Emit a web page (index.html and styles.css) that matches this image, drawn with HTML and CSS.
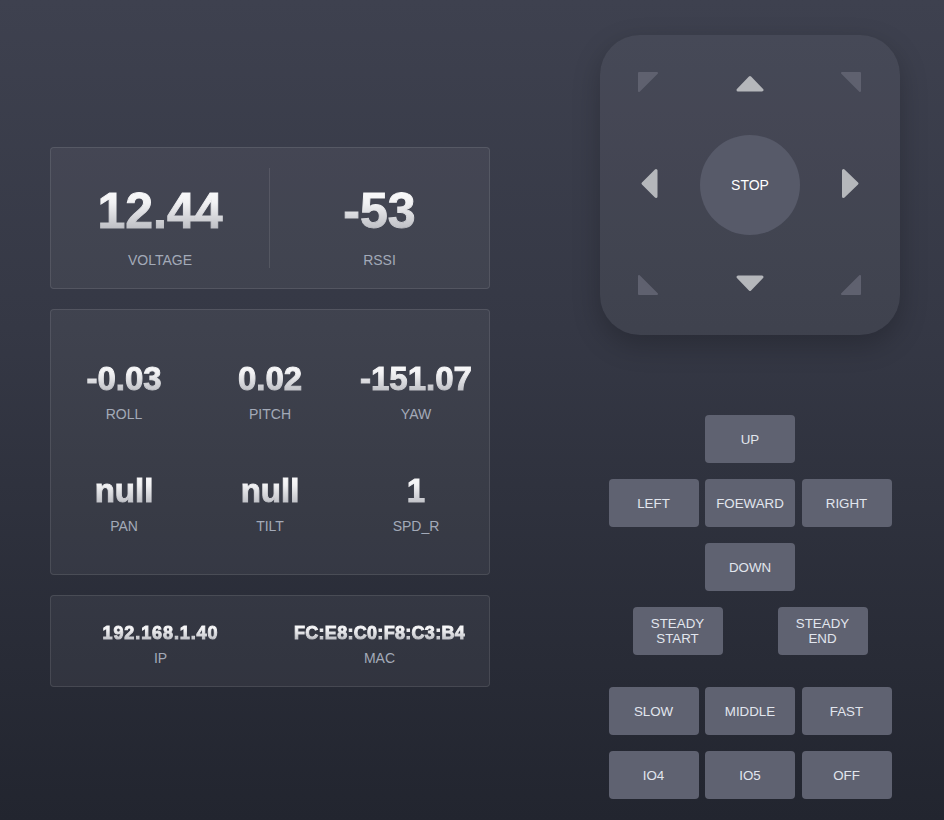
FILE: index.html
```html
<!DOCTYPE html>
<html>
<head>
<meta charset="utf-8">
<link rel="stylesheet" href="styles.css">
</head>
<body>
<div class="page">
  <div class="left">
    <div class="card card-power">
      <div class="cell cell-divider">
        <div class="val val-xl">12.44</div>
        <div class="lbl">VOLTAGE</div>
      </div>
      <div class="cell">
        <div class="val val-xl">-53</div>
        <div class="lbl">RSSI</div>
      </div>
    </div>
    <div class="card card-imu">
      <div class="cell"><div class="val val-md">-0.03</div><div class="lbl">ROLL</div></div>
      <div class="cell"><div class="val val-md">0.02</div><div class="lbl">PITCH</div></div>
      <div class="cell"><div class="val val-md">-151.07</div><div class="lbl">YAW</div></div>
      <div class="cell"><div class="val val-md">null</div><div class="lbl">PAN</div></div>
      <div class="cell"><div class="val val-md">null</div><div class="lbl">TILT</div></div>
      <div class="cell"><div class="val val-md">1</div><div class="lbl">SPD_R</div></div>
    </div>
    <div class="card card-net">
      <div class="cell"><div class="val val-sm val-ip">192.168.1.40</div><div class="lbl">IP</div></div>
      <div class="cell"><div class="val val-sm val-mac">FC:E8:C0:F8:C3:B4</div><div class="lbl">MAC</div></div>
    </div>
  </div>

  <div class="right">
    <div class="pad">
      <div class="pad-cell">
        <svg width="100" height="100" viewBox="0 0 100 100"><polygon class="corner" points="39,38 57,38 39,56"/></svg>
      </div>
      <div class="pad-cell">
        <svg width="100" height="100" viewBox="0 0 100 100"><polygon class="arrow" points="50,42.5 62,55 38,55"/></svg>
      </div>
      <div class="pad-cell">
        <svg width="100" height="100" viewBox="0 0 100 100"><polygon class="corner" points="42,38 60,38 60,56"/></svg>
      </div>
      <div class="pad-cell">
        <svg width="100" height="100" viewBox="0 0 100 100"><polygon class="arrow" points="43,48.5 56,35.5 56,61.5"/></svg>
      </div>
      <div class="pad-cell">
        <button class="stop">STOP</button>
      </div>
      <div class="pad-cell">
        <svg width="100" height="100" viewBox="0 0 100 100"><polygon class="arrow" points="57,48.5 43.5,35.5 43.5,61.5"/></svg>
      </div>
      <div class="pad-cell">
        <svg width="100" height="100" viewBox="0 0 100 100"><polygon class="corner" points="39,41 39,59 57,59"/></svg>
      </div>
      <div class="pad-cell">
        <svg width="100" height="100" viewBox="0 0 100 100"><polygon class="arrow" points="38,42 62,42 50,54.5"/></svg>
      </div>
      <div class="pad-cell">
        <svg width="100" height="100" viewBox="0 0 100 100"><polygon class="corner" points="60,41 60,59 42,59"/></svg>
      </div>
    </div>

    <div class="controls">
      <div class="row"><button class="btn">UP</button></div>
      <div class="row"><button class="btn">LEFT</button><button class="btn">FOEWARD</button><button class="btn">RIGHT</button></div>
      <div class="row"><button class="btn">DOWN</button></div>
      <div class="row row-wide"><button class="btn">STEADY<br>START</button><button class="btn">STEADY<br>END</button></div>
      <div class="row row-spaced"><button class="btn">SLOW</button><button class="btn">MIDDLE</button><button class="btn">FAST</button></div>
      <div class="row"><button class="btn">IO4</button><button class="btn">IO5</button><button class="btn">OFF</button></div>
    </div>
  </div>
</div>
</body>
</html>
```

FILE: styles.css
```css
html, body {
  margin: 0;
  padding: 0;
}

body {
  width: 944px;
  height: 820px;
  overflow: hidden;
  background: linear-gradient(180deg, #3e414f 0%, #353845 40%, #22252f 100%);
  font-family: "Liberation Sans", Arial, sans-serif;
  color: #e2e5ec;
}

.page {
  display: flex;
  align-items: flex-start;
  padding: 35px 0 0 50px;
  gap: 110px;
}

.left {
  width: 440px;
  margin-top: 112px;
  display: flex;
  flex-direction: column;
  gap: 20px;
}

.card {
  box-sizing: border-box;
  background: rgba(255, 255, 255, 0.05);
  border: 1px solid rgba(255, 255, 255, 0.1);
  border-radius: 4px;
  display: grid;
}

.cell {
  display: flex;
  flex-direction: column;
  align-items: center;
}

.val {
  font-weight: bold;
  background: linear-gradient(180deg, #ffffff 0%, #f2f2f4 35%, #a9abb2 100%);
  -webkit-background-clip: text;
  background-clip: text;
  color: transparent;
  -webkit-text-stroke: 1px transparent;
  white-space: nowrap;
}

.lbl {
  font-size: 14px;
  line-height: 16px;
  color: #a3aab8;
}

/* power card */
.card-power {
  grid-template-columns: 1fr 1fr;
  padding: 20px 0;
}

.card-power .cell {
  height: 100px;
}

.cell-divider {
  border-right: 1px solid rgba(255, 255, 255, 0.1);
}

.val-xl {
  font-size: 50px;
  line-height: 56px;
  margin-top: 15px;
  margin-bottom: 13px;
}

/* imu card */
.card-imu {
  grid-template-columns: repeat(3, 1fr);
  grid-auto-rows: 112px;
  padding: 24px 0 16px;
}

.card-imu .cell {
  justify-content: center;
}

.val-md {
  font-size: 33px;
  line-height: 40px;
  margin-bottom: 6px;
  position: relative;
  top: 0;
}

.card-imu .lbl {
  margin-top: 1px;
}

/* net card */
.card-net {
  grid-template-columns: 1fr 1fr;
  padding: 26px 0 20px;
}

.val-sm {
  font-size: 18px;
  line-height: 22px;
  margin-bottom: 6px;
}

.val-ip {
  letter-spacing: 0.9px;
}

.val-mac {
  letter-spacing: 0.3px;
}

/* right column */
.right {
  width: 300px;
  display: flex;
  flex-direction: column;
  align-items: center;
}

.pad {
  width: 300px;
  height: 300px;
  border-radius: 40px;
  background: rgba(255, 255, 255, 0.05);
  box-shadow: 0 10px 28px rgba(0, 0, 0, 0.22);
  display: grid;
  grid-template-columns: repeat(3, 100px);
  grid-template-rows: repeat(3, 100px);
}

.pad-cell {
  display: flex;
  align-items: center;
  justify-content: center;
}

.pad-cell svg {
  display: block;
}

.arrow {
  fill: #b5b7bb;
  stroke: #b5b7bb;
  stroke-width: 3;
  stroke-linejoin: round;
}

.corner {
  fill: #5f616f;
  stroke: #5f616f;
  stroke-width: 2;
  stroke-linejoin: round;
}

.stop {
  width: 100px;
  height: 100px;
  border-radius: 50%;
  border: none;
  background: #575a69;
  color: #ffffff;
  font-family: "Liberation Sans", Arial, sans-serif;
  font-size: 14px;
  padding: 0;
}

.controls {
  margin-top: 80px;
  display: flex;
  flex-direction: column;
  gap: 16px;
  width: 283px;
}

.row {
  display: flex;
  justify-content: center;
  gap: 6.5px;
}

.row-wide {
  gap: 55px;
}

.row-spaced {
  margin-top: 16px;
}

.btn {
  width: 90px;
  height: 48px;
  border: none;
  border-radius: 4px;
  background: #5f6271;
  color: #e2e6ee;
  font-family: "Liberation Sans", Arial, sans-serif;
  font-size: 13.333px;
  line-height: 15px;
  padding: 0;
}
```
